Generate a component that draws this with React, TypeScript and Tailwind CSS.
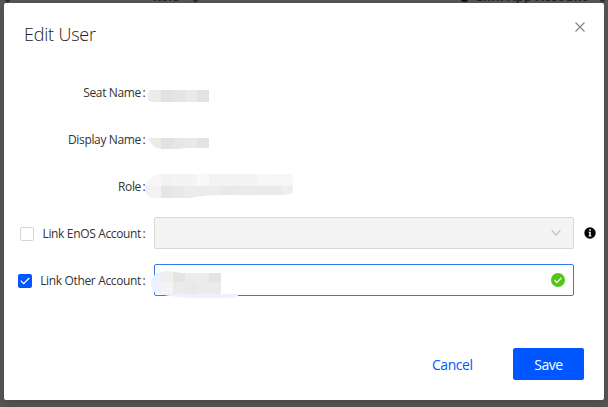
import type { ReactNode } from "react";

type Cell = [x: number, y: number, w: number, h: number, fill: string];

interface MosaicProps {
  id: string;
  width: number;
  height: number;
  outline: string;
  cells: Cell[];
  className?: string;
}

function Mosaic({ id, width, height, outline, cells, className = "" }: MosaicProps) {
  return (
    <svg width={width} height={height} viewBox={`0 0 ${width} ${height}`} className={`shrink-0 ${className}`}>
      <clipPath id={id}>
        <path d={outline} />
      </clipPath>
      <g clipPath={`url(#${id})`} shapeRendering="crispEdges">
        {cells.map(([x, y, w, h, fill]) => (
          <rect key={`${x}-${y}`} x={x} y={y} width={w} height={h} fill={fill} />
        ))}
      </g>
    </svg>
  );
}

function Label({ children, className = "" }: { children: ReactNode; className?: string }) {
  return (
    <span className={`flex shrink-0 justify-end whitespace-nowrap leading-4 text-[#333] ${className}`}>
      <span className="tracking-[-0.35px]">{children}</span>
      <span className="w-[5px] pl-[1.500px]">:</span>
    </span>
  );
}

const seatCells: Cell[] = [
  [0, 0, 13, 12, "#ececec"], [13, 0, 12, 12, "#e2e2e2"], [25, 0, 12, 12, "#e5e5e5"],
  [37, 0, 12, 12, "#eaeaea"], [49, 0, 12, 12, "#e2e2e2"],
];
const displayCells: Cell[] = [
  [0, 0, 13, 11, "#ececec"], [13, 0, 12, 11, "#e2e2e2"], [25, 0, 12, 11, "#e6e6e6"],
  [37, 0, 12, 10, "#e9e9e9"], [49, 0, 12, 10, "#e3e3e3"],
];
const roleCells: Cell[] = [
  [0, 0, 16, 12, "#f7f7f7"], [16, 0, 12, 12, "#f2f2f2"], [28, 0, 24, 12, "#f4f4f4"],
  [52, 0, 12, 12, "#f9f9f9"], [64, 0, 48, 12, "#f3f3f3"], [112, 0, 12, 12, "#f7f7f7"],
  [124, 0, 24, 12, "#f6f6f6"],
  [0, 12, 4, 12, "#efefef"], [4, 12, 12, 12, "#f3f3f3"], [16, 12, 12, 12, "#e6e6e6"],
  [28, 12, 12, 12, "#e9e9e9"], [40, 12, 36, 12, "#ececec"], [76, 12, 12, 12, "#e8e8e8"],
  [88, 12, 24, 12, "#eaeaea"], [112, 12, 24, 12, "#e9e9e9"], [136, 12, 12, 12, "#eeeeee"],
];
const accountCells: Cell[] = [
  [0, 0, 87, 27, "#edf1fe"],
  [10, 0, 12, 11, "#efefef"], [22, 0, 12, 11, "#e4e4e4"], [34, 2, 24, 9, "#ececec"],
  [58, 2, 12, 9, "#e4e4e4"], [70, 0, 17, 23, "#ffffff"],
  [10, 11, 12, 12, "#f4f4f4"], [22, 11, 12, 12, "#ebebeb"], [34, 11, 12, 12, "#e9e9e9"],
  [46, 11, 24, 12, "#ebebeb"],
];

export default function App() {
  return (
    <div className="relative h-[407px] w-[608px] overflow-hidden bg-[#575655] px-1 pt-[3px] font-['Open_Sans','Noto_Sans',sans-serif] text-[12px]">
      <div className="absolute inset-x-0 top-0 h-[3px] overflow-hidden text-[12px] font-bold leading-4 text-[#222]">
        <span className="absolute left-[153px] -top-[11px]">Role</span>
        <span className="absolute left-[476px] -top-[11px] whitespace-nowrap tracking-[0.45px]">Link App Account</span>
        <span className="absolute left-[460px] -top-[7px] size-[9px] rounded-full bg-[#111]" />
        <span className="absolute left-[5px] -top-[3px] size-[5px] rotate-45 bg-[#303030]" />
        <span className="absolute left-[193px] -top-[3px] size-[5px] rotate-45 bg-[#303030]" />
        <span className="absolute left-[600px] -top-[3px] size-[5px] rotate-45 bg-[#303030]" />
      </div>
      <main className="relative flex h-[397px] w-[600px] flex-col rounded-[2px] bg-white shadow-[0_4px_12px_rgba(0,0,0,0.15)]">
        <header className="flex h-[62px] items-start justify-between pl-5 pr-[19px] pt-5">
          <h1 className="-mt-px text-[18px] font-light leading-6 tracking-[-0.2px] text-[#222]">Edit User</h1>
          <button aria-label="Close" className="-mt-px flex">
            <svg width="10" height="10" viewBox="0 0 10 10" fill="none" stroke="#858585" strokeWidth="1.2">
              <path d="M.5.5l9 9M9.500.5l-9 9" />
            </svg>
          </button>
        </header>
        <div className="flex h-[47px] items-start">
          <Label className="mt-5 w-[142px]">Seat Name</Label>
          <Mosaic id="seat" width={61} height={12} className="ml-[2px] mt-[25px]" cells={seatCells}
            outline="M2 0H61V12H4Q0 12 0 8V4Q0 1 2 0Z" />
        </div>
        <div className="flex h-[47px] items-start">
          <Label className="mt-5 w-[142px]">Display Name</Label>
          <Mosaic id="display" width={61} height={11} className="ml-[2px] mt-[26px]" cells={displayCells}
            outline="M0 0H61V10H37Q34 11 30 11H13Q4 10 0 0Z" />
        </div>
        <div className="flex h-[58px] items-start">
          <Label className="mt-5 w-[142px]">Role</Label>
          <Mosaic id="role" width={148} height={24} className="-ml-px mt-[15px]" cells={roleCells}
            outline="M16 0H148V19Q142 21 136 21H80Q58 21 46 24H5Q4 21 1 19Q-1 14 1 9Q4 2 16 0Z" />
        </div>
        <div className="flex h-[47px] items-start pl-4">
          <span className="mt-[10px] size-[14px] rounded-[2px] border border-[#d7d7d7] bg-white" />
          <Label className="mt-[9px] w-[112px]">Link EnOS Account</Label>
          <button aria-label="EnOS account" disabled className="ml-2 flex h-8 w-[420px] items-center justify-end rounded-[2px] border border-[#d9d9d9] bg-[#f3f3f3] pr-3">
            <svg width="10" height="6" viewBox="0 0 10 6" fill="none" stroke="#c1c1c1" strokeWidth="1.2">
              <path d="M.7.4L5 5 9.300.4" />
            </svg>
          </button>
          <svg width="12" height="12" viewBox="0 0 12 12" className="ml-[10px] mt-[10px]">
            <circle cx="6" cy="6" r="5.700" fill="#000" />
            <path d="M5.200 2.200h1.600v1.500H5.200zM4.500 4.700h2.200v3.700h.7v1H4.500v-1h.7V5.600h-.7z" fill="#fff" />
          </svg>
        </div>
        <div className="flex h-[84px] items-start pl-[14px]">
          <span className="mt-[10px] flex size-[14px] items-center justify-center rounded-[2px] bg-[#0057ff]">
            <svg width="10" height="8" viewBox="0 0 10 8" fill="none" stroke="#fff" strokeWidth="1.200">
              <path d="M.7 3.700l3 3L9.300 1" />
            </svg>
          </span>
          <Label className="mt-[9px] w-[114px]">Link Other Account</Label>
          <div className="relative ml-2 flex h-8 w-[420px] items-center justify-end rounded-[2px] border border-[#3478f6] bg-white pr-2">
            <Mosaic id="account" width={87} height={27} className="absolute -left-[4px] top-[6px]" cells={accountCells}
              outline="M10 1Q18-1 30 2H87V26Q80 27 60 27H40Q20 26 10 23Q0 23 0 13Q0 3 10 1Z" />
            <svg width="14" height="14" viewBox="0 0 14 14" className="-mt-px">
              <circle cx="7" cy="7" r="7" fill="#52c41a" />
              <path d="M3.500 7l2.400 2.500L10.500 4.700" fill="none" stroke="#e8f8dd" strokeWidth="1.300" />
            </svg>
          </div>
        </div>
        <footer className="flex h-8 items-center justify-end pr-5 text-[14px] leading-5 tracking-[-0.45px]">
          <button className="mr-[38px] mt-px w-[43px] whitespace-nowrap text-left text-[#0057ff]">Cancel</button>
          <button className="h-8 w-[71px] rounded-[2px] bg-[#0057ff] pt-px text-white">Save</button>
        </footer>
      </main>
    </div>
  );
}
